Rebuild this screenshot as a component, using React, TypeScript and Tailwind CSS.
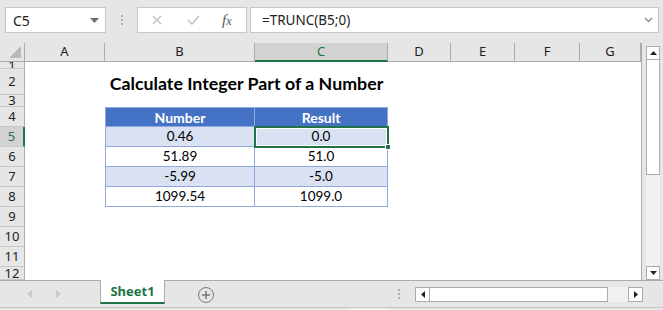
import { Fragment } from 'react'

const cols = ['A', 'B', 'C', 'D', 'E', 'F', 'G']
const rowHeights = ['h-[7px]', 'h-[26px]', 'h-[12px]', 'h-[20px]', 'h-[20px]', 'h-[20px]', 'h-[20px]', 'h-[20px]', 'h-[20px]', 'h-[20px]', 'h-[20px]', 'h-[13px]']

const data = [
  ['0.46', '0.0'],
  ['51.89', '51.0'],
  ['-5.99', '-5.0'],
  ['1099.54', '1099.0'],
]

const ui = "font-['Noto_Sans',sans-serif]"
const cell = "font-['Lato',sans-serif]"

function FormulaBar() {
  return (
    <div className={`h-[43px] flex items-start pt-[7px] ${ui}`}>
      <div className="ml-[5px] w-[101px] h-[26px] bg-white border border-[#c6c6c6] flex items-center justify-between pl-[7px] pr-[6px]">
        <span className="text-[14px] text-[#222]">C5</span>
        <svg width="9" height="5" viewBox="0 0 9 5"><path d="M0 0h9L4.5 5z" fill="#6d6d6d" /></svg>
      </div>
      <div className="w-[31px] h-[26px] flex flex-col items-center justify-center gap-[2px]">
        <span className="w-[2px] h-[2px] bg-[#b0b0b0]" />
        <span className="w-[2px] h-[2px] bg-[#b0b0b0]" />
        <span className="w-[2px] h-[2px] bg-[#b0b0b0]" />
      </div>
      <div className="w-[110px] h-[26px] bg-white border border-[#c6c6c6] flex items-center">
        <svg className="ml-[14px]" width="10" height="10" viewBox="0 0 10 10">
          <path d="M1 1l8 8M9 1l-8 8" stroke="#c2c2c2" strokeWidth="1.4" />
        </svg>
        <svg className="ml-[25px]" width="13" height="10" viewBox="0 0 13 10">
          <path d="M1 5l4 4 7-8" stroke="#c2c2c2" strokeWidth="1.5" fill="none" />
        </svg>
        <span className="ml-[22px] text-[15px] italic text-[#555] font-['Liberation_Serif',serif] leading-none">
          f<span className="text-[12px]">x</span>
        </span>
      </div>
      <div className="ml-[3px] w-[409px] h-[26px] bg-white border border-[#c6c6c6] flex items-center justify-between pl-[11px] pr-[5px]">
        <span className="text-[13.5px] text-[#222]">=TRUNC(B5;0)</span>
        <svg width="9" height="6" viewBox="0 0 9 6"><path d="M1 1l3.5 3.5L8 1" stroke="#888" strokeWidth="1.4" fill="none" /></svg>
      </div>
    </div>
  )
}

function Sheet() {
  return (
    <div className="relative w-[642px] h-[237px] border-r border-[#ababab]">
      <div className="grid grid-cols-[25px_80px_150px_133px_63px_64px_65px_61px] bg-white">
        <div className="h-[19px] bg-[#e6e6e6] border-r border-b border-[#ababab] flex items-end justify-end p-[3px]">
          <svg width="12" height="12" viewBox="0 0 12 12"><path d="M12 0v12H0z" fill="#b9b9b9" /></svg>
        </div>
        {cols.map((c) => (
          <div
            key={c}
            className={`h-[19px] flex items-center justify-center text-[13px] ${ui} ${
              c === 'C'
                ? 'bg-[#d2d2d2] text-[#217346] border-b-2 border-b-[#217346] border-r border-r-[#ababab]'
                : 'bg-[#e6e6e6] text-[#222] border-b border-r border-[#ababab] last:border-r-0'
            }`}
          >
            {c}
          </div>
        ))}
        {rowHeights.map((h, i) => {
          const n = i + 1
          return (
            <Fragment key={n}>
              <div
                className={`${h} overflow-hidden flex items-center justify-center text-[13px] leading-none ${ui} border-b border-b-[#c8c8c8] ${
                  n === 5
                    ? 'bg-[#d2d2d2] text-[#217346] border-r-2 border-r-[#217346]'
                    : 'bg-[#e6e6e6] text-[#222] border-r border-r-[#ababab]'
                }`}
              >
                {n}
              </div>
              <div className={h} />
              {n === 2 ? (
                <div className={`${h} col-span-2 flex items-center justify-center pt-[2px] text-[17.8px] font-bold text-black ${cell}`}>
                  Calculate Integer Part of a Number
                </div>
              ) : n === 4 ? (
                <>
                  <div className={`${h} border border-[#8ea9db] bg-[#4472c4] text-white font-bold text-[14px] flex items-center justify-center ${cell}`}>Number</div>
                  <div className={`${h} border border-l-0 border-[#8ea9db] bg-[#4472c4] text-white font-bold text-[14px] flex items-center justify-center ${cell}`}>Result</div>
                </>
              ) : n >= 5 && n <= 8 ? (
                data[n - 5].map((v, j) => (
                  <div
                    key={j}
                    className={`${h} border-b border-r border-[#8ea9db] ${j === 0 ? 'border-l' : ''} ${
                      n % 2 === 1 ? 'bg-[#d9e1f2]' : 'bg-white'
                    } text-[13.5px] text-black flex items-center justify-center ${cell}`}
                  >
                    {v}
                  </div>
                ))
              ) : (
                <>
                  <div className={h} />
                  <div className={h} />
                </>
              )}
              <div className={h} />
              <div className={h} />
              <div className={h} />
              <div className={h} />
            </Fragment>
          )
        })}
      </div>
      <div className="absolute left-[254px] top-[83px] w-[135px] h-[22px] border-2 border-[#217346]">
        <div className="w-full h-full border border-white" />
        <div className="absolute -right-[4px] -bottom-[4px] w-[6px] h-[6px] bg-[#217346] border border-white" />
      </div>
    </div>
  )
}

function VScroll() {
  return (
    <div className="w-[21px] h-[237px] pl-[4px] pr-[3px] flex flex-col">
      <div className="h-[3px]" />
      <div className="h-[14px] bg-white border border-[#ababab] flex items-center justify-center">
        <svg width="7" height="4" viewBox="0 0 7 4"><path d="M0 4h7L3.5 0z" fill="#222" /></svg>
      </div>
      <div className="flex-1 bg-[#f0f0f0] flex flex-col">
        <div className="h-[115px] bg-white border border-t-0 border-[#ababab]" />
      </div>
      <div className="h-[14px] bg-white border border-[#ababab] flex items-center justify-center">
        <svg width="7" height="4" viewBox="0 0 7 4"><path d="M0 0h7L3.5 4z" fill="#222" /></svg>
      </div>
    </div>
  )
}

function TabBar() {
  return (
    <div className={`h-[27px] flex items-start border-t border-[#ababab] ${ui}`}>
      <div className="w-[100px] h-[26px] flex items-center">
        <svg className="ml-[27px]" width="5" height="8" viewBox="0 0 5 8"><path d="M5 0v8L0 4z" fill="#c8c8c8" /></svg>
        <svg className="ml-[24px]" width="5" height="8" viewBox="0 0 5 8"><path d="M0 0v8l5-4z" fill="#c8c8c8" /></svg>
      </div>
      <div className="w-[65px] h-[24px] -mt-px bg-white border-x border-[#ababab] border-b-2 border-b-[#217346] flex items-center justify-center">
        <span className="text-[13px] font-bold text-[#217346] pt-[1px]">Sheet1</span>
      </div>
      <div className="ml-[33px] mt-[6px] w-[16px] h-[16px] rounded-full border-[1.5px] border-[#7a7a7a] flex items-center justify-center">
        <svg width="8" height="8" viewBox="0 0 8 8"><path d="M4 0v8M0 4h8" stroke="#7a7a7a" strokeWidth="1.5" /></svg>
      </div>
      <div className="ml-[184px] mt-[8px] flex flex-col gap-[2px]">
        <span className="w-[2px] h-[2px] bg-[#b0b0b0]" />
        <span className="w-[2px] h-[2px] bg-[#b0b0b0]" />
        <span className="w-[2px] h-[2px] bg-[#b0b0b0]" />
      </div>
      <div className="ml-[15px] mt-[6px] w-[228px] h-[15px] flex bg-[#f0f0f0]">
        <div className="w-[15px] h-full bg-white border border-[#ababab] flex items-center justify-center">
          <svg width="4" height="7" viewBox="0 0 4 7"><path d="M4 0v7L0 3.5z" fill="#222" /></svg>
        </div>
        <div className="w-[178px] h-full bg-white border border-l-0 border-[#ababab]" />
        <div className="flex-1" />
        <div className="w-[15px] h-full bg-white border border-[#ababab] flex items-center justify-center">
          <svg width="4" height="7" viewBox="0 0 4 7"><path d="M0 0v7l4-3.5z" fill="#222" /></svg>
        </div>
      </div>
    </div>
  )
}

export default function App() {
  return (
    <div className="w-[663px] h-[310px] bg-[#e6e6e6] overflow-hidden flex flex-col">
      <FormulaBar />
      <div className="flex">
        <Sheet />
        <VScroll />
      </div>
      <TabBar />
      <div className="flex-1 border-t border-[#c6c6c6] flex">
        <div className="ml-[350px] w-[40px] h-full bg-[#f0f0f0]" />
      </div>
    </div>
  )
}
